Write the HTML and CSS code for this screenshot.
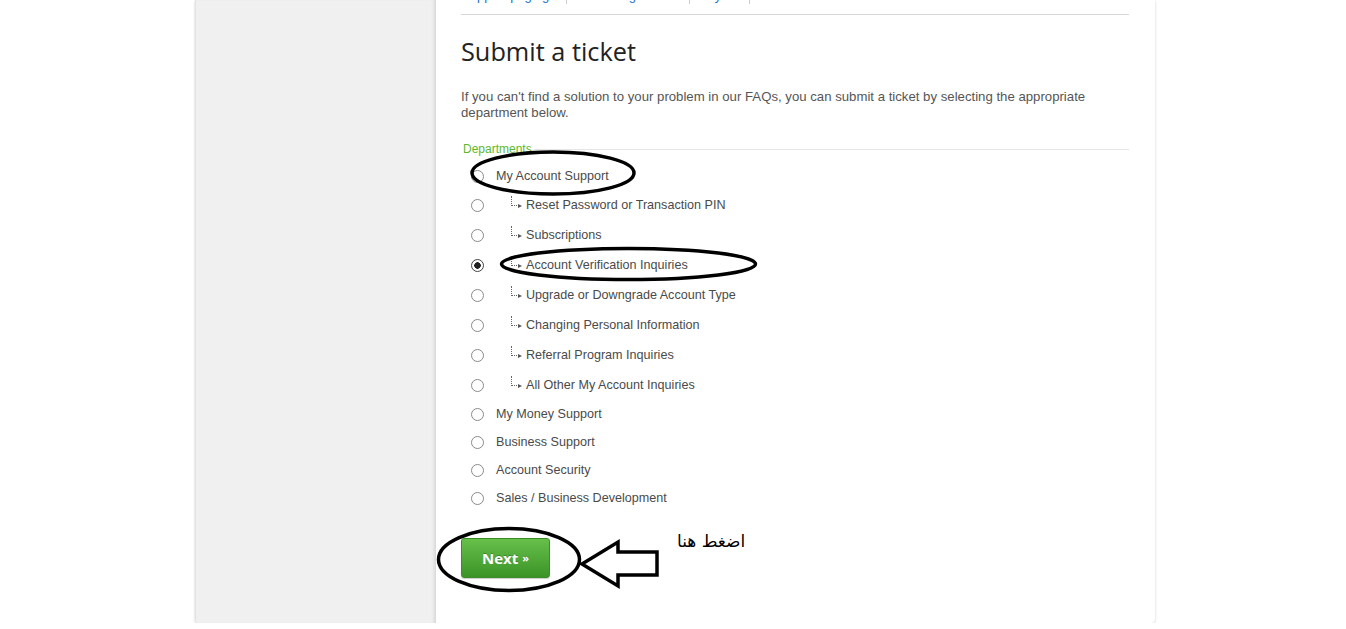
FILE: index.html
```html
<!doctype html>
<html>
<head>
<meta charset="utf-8">
<title>Submit a ticket</title>
<link rel="stylesheet" href="styles.css">
</head>
<body>
<div class="wrap">
	<aside class="side"></aside>
	<main class="main">
		<nav class="tabs">
			<a class="t1" href="#">Support paging</a>
			<a class="t2" href="#">Knowledge Base</a>
			<a class="t3" href="#">My Tickets</a>
		</nav>

		<h1>Submit a ticket</h1>
		<p class="intro">If you can't find a solution to your problem in our FAQs, you can submit a ticket by selecting the appropriate department below.</p>

		<fieldset class="depts">
			<legend>Departments</legend>
			<ul>
				<li><label><input type="radio" name="dept"> My Account Support</label></li>
				<li class="sub"><label><input type="radio" name="dept"><i class="tree"></i>Reset Password or Transaction PIN</label></li>
				<li class="sub"><label><input type="radio" name="dept"><i class="tree"></i>Subscriptions</label></li>
				<li class="sub"><label><input type="radio" name="dept" checked><i class="tree"></i>Account Verification Inquiries</label></li>
				<li class="sub"><label><input type="radio" name="dept"><i class="tree"></i>Upgrade or Downgrade Account Type</label></li>
				<li class="sub"><label><input type="radio" name="dept"><i class="tree"></i>Changing Personal Information</label></li>
				<li class="sub"><label><input type="radio" name="dept"><i class="tree"></i>Referral Program Inquiries</label></li>
				<li class="sub"><label><input type="radio" name="dept"><i class="tree"></i>All Other My Account Inquiries</label></li>
				<li><label><input type="radio" name="dept"> My Money Support</label></li>
				<li><label><input type="radio" name="dept"> Business Support</label></li>
				<li><label><input type="radio" name="dept"> Account Security</label></li>
				<li><label><input type="radio" name="dept"> Sales / Business Development</label></li>
			</ul>
		</fieldset>

		<button class="next" type="button">Next <span>&raquo;</span></button>

		<!-- hand drawn marks over the form -->
		<svg class="marks" width="719" height="623" viewBox="0 0 719 623">
			<g fill="none" stroke="#000" stroke-width="3.5">
				<ellipse cx="117" cy="173" rx="81" ry="21"/>
				<ellipse cx="192.5" cy="264" rx="127" ry="15.5"/>
				<ellipse cx="73" cy="559.5" rx="70.5" ry="31"/>
				<polygon points="146,564 182,542 182,552 221,552 221,575 182,575 182,586"/>
			</g>
		</svg>
		<span class="hint">اضغط هنا</span>
	</main>
</div>
</body>
</html>
```

FILE: styles.css
```css
*{
	margin:0;
	padding:0;
	box-sizing:border-box;
}
body{
	background:#fff;
	font-family:"Liberation Sans", Arial, sans-serif;
	overflow:hidden;
}
.wrap{
	width:960px;
	margin:0 auto 0 195px;
	display:flex;
	border-left:1px solid #e2e2e2;
	border-radius:0 0 4px 4px;
	box-shadow:0 1px 3px rgba(0,0,0,.18);
	background:#fff;
}
.side{
	width:240px;
	flex:none;
	background:#f0f0f0;
	border-radius:0 0 0 4px;
	box-shadow:inset -4px 0 4px -3px rgba(0,0,0,.15);
}
.main{
	flex:1;
	position:relative;
	padding:0 26px 45px 25px;
}

/* top tabs, scrolled mostly out of view */
.tabs{
	display:flex;
	margin-top:-13px;
	padding-bottom:10px;
	border-bottom:1px solid #d8d8d8;
	font-size:13px;
	line-height:17px;
}
.tabs a{
	color:#1a6fd0;
	text-decoration:none;
	border-right:1px solid #ccc;
	white-space:nowrap;
	overflow:hidden;
}
.tabs .t1{ width:106px; }
.tabs .t2{ width:123px; padding-left:12px; }
.tabs .t3{ width:60px; padding-left:14px; }

h1{
	font-family:"Open Sans", sans-serif;
	font-weight:normal;
	font-size:25.3px;
	line-height:32px;
	color:#222;
	margin-top:20px;
}
.intro{
	margin-top:22px;
	font-size:13.2px;
	line-height:16px;
	color:#555;
}

.depts{
	margin-top:21px;
	border:0;
	border-top:1px solid #e6e6e6;
}
.depts legend{
	font-size:12px;
	line-height:14px;
	color:#5cb82e;
	padding:0 2px;
}
.depts ul{
	list-style:none;
	margin-top:6px;
}
.depts li{
	height:28px;
	display:flex;
	align-items:center;
}
.depts li.sub{
	height:30px;
}
.depts label{
	display:flex;
	align-items:center;
	font-size:12.6px;
	color:#4a4a4a;
}
.depts input{
	-webkit-appearance:none;
	appearance:none;
	width:13px;
	height:13px;
	border:1px solid #8a8a8a;
	border-radius:50%;
	background:#fff;
	margin:0 12px 0 10px;
}
.depts input:checked{
	background:radial-gradient(circle, #222 0 3px, #fff 3.5px);
	border-color:#444;
}
.tree{
	width:6px;
	height:10px;
	margin:0 9px 0 15px;
	position:relative;
	top:-4px;
	border-left:1px dotted #666;
	border-bottom:1px dotted #666;
}
.tree::after{
	content:"";
	position:absolute;
	right:-5px;
	bottom:-3px;
	border-left:4px solid #555;
	border-top:2.5px solid transparent;
	border-bottom:2.5px solid transparent;
}

.next{
	margin-top:26px;
	width:89px;
	height:40px;
	border:1px solid #3c8d27;
	border-radius:3px;
	background:linear-gradient(#66c04a, #3b9427);
	color:#fff;
	font-family:"Open Sans", sans-serif;
	font-weight:bold;
	font-size:15px;
	text-shadow:0 -1px 0 rgba(0,0,0,.25);
	box-shadow:0 1px 1px rgba(0,0,0,.2);
}
.next span{
	font-size:11px;
	vertical-align:2px;
}

.marks{
	position:absolute;
	left:0;
	top:0;
	pointer-events:none;
}
.hint{
	position:absolute;
	left:241px;
	top:531px;
	font-family:"DejaVu Sans", sans-serif;
	font-size:17px;
	color:#000;
	direction:rtl;
}
```
